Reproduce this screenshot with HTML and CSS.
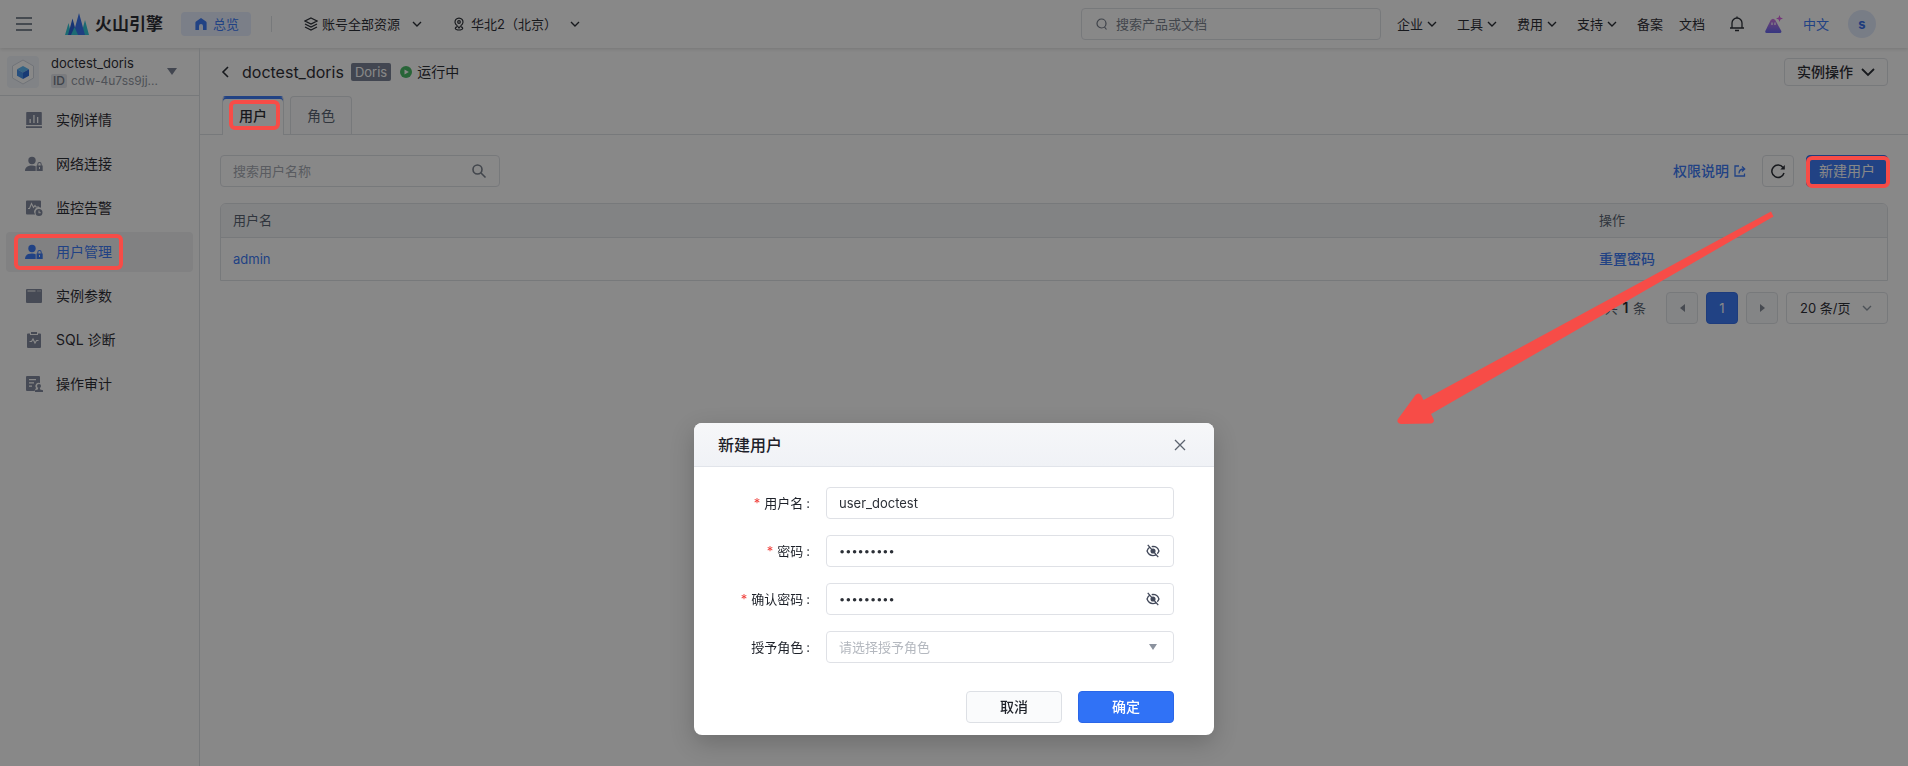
FILE: index.html
```html
<!DOCTYPE html>
<html lang="zh-CN">
<head>
<meta charset="utf-8">
<title>用户管理</title>
<link rel="stylesheet" href="styles.css">
</head>
<body>
<svg class="defs" width="0" height="0" aria-hidden="true">
  <symbol id="down" viewBox="0 0 10 10"><path d="M1 3l4 4 4-4" fill="none" stroke="currentColor" stroke-width="1.4"/></symbol>
  <symbol id="user-lock" viewBox="0 0 18 18"><circle cx="7" cy="5.5" r="3.7"/><path d="M0 16c0-4 3-5.500 7-5.500 1.500 0 2.700.2 3.700.7V16z"/><path fill-rule="evenodd" d="M11.500 10.500h.8V9.300a2.200 2.200 0 0 1 4.400 0v1.200h1V16h-6.200zM13.300 10.500h2.400V9.300a1.200 1.200 0 0 0-2.400 0zM14 12v2h1v-2z"/></symbol>
  <symbol id="eye-off" viewBox="0 0 16 16"><g fill="none" stroke="currentColor" stroke-width="1.500"><path d="M4.500 3.500C2.800 4.700 1.700 6.500 1.200 8c1 3 3.600 5.200 6.800 5.200 1.200 0 2.300-.3 3.200-.8M6.500 3A7 7 0 0 1 8 2.800c3.200 0 5.800 2.200 6.800 5.200a7.500 7.500 0 0 1-1.900 3.100M2 1l12 14"/></g><circle cx="8" cy="8" r="2.900"/></symbol>
</svg>

<div class="app">
<header class="topbar">
  <button class="plain menu-btn" aria-label="菜单"><svg width="16" height="14" viewBox="0 0 16 14"><path d="M0 1h16M0 7h16M0 13h16" stroke="currentColor" stroke-width="1.500"/></svg></button>
  <a class="brand" href="#">
    <svg width="24" height="22" viewBox="0 0 24 22"><path fill="#26c4d4" d="M3.500 10l3 12H0zM20 7l4 15h-8z"/><path fill="#1d56d6" d="M7.500 5.500L12 22H3z"/><path fill="#2d6bf0" d="M14 0l6 22H8z"/><path fill="#26c4d4" d="M9.500 14l3.500 8H6z"/></svg>
    <span>火山引擎</span>
  </a>
  <a class="overview" href="#"><svg width="12" height="12" viewBox="0 0 12 12"><path fill="currentColor" d="M6 0l5 3.500q.6.400.6 1.200V12H8V8a2 2 0 0 0-4 0v4H.4V4.700q0-.8.600-1.200z"/></svg>总览</a>
  <span class="divider"></span>
  <button class="plain scope"><svg width="14" height="14" viewBox="0 0 14 14" fill="none" stroke="currentColor" stroke-width="1.300"><path d="M7 1l6 3-6 3-6-3zM1 7l6 3 6-3M1 10l6 3 6-3"/></svg>账号全部资源<svg class="chev" width="10" height="10"><use href="#down"/></svg></button>
  <button class="plain region"><svg width="10" height="14" viewBox="0 0 10 14" fill="none" stroke="currentColor" stroke-width="1.200"><path d="M3 8.500a4 4 0 1 1 4 0"/><circle cx="5" cy="5" r="1.300"/><path d="M3 8.500L5 11l2-2.500M3 9.800c-2.500.6-2.500 3.200 2 3.200s4.500-2.600 2-3.200"/></svg>华北2（北京）<svg class="chev" width="10" height="10"><use href="#down"/></svg></button>
  <label class="top-search"><svg width="12" height="12" viewBox="0 0 12 12" fill="none" stroke="currentColor" stroke-width="1.200"><circle cx="5.500" cy="5.500" r="4.500"/><path d="M8.500 9l2 2.500"/></svg><input type="search" placeholder="搜索产品或文档" aria-label="搜索产品或文档"></label>
  <nav class="top-nav">
    <a class="drop" href="#">企业<svg width="10" height="10"><use href="#down"/></svg></a>
    <a class="drop" href="#">工具<svg width="10" height="10"><use href="#down"/></svg></a>
    <a class="drop" href="#">费用<svg width="10" height="10"><use href="#down"/></svg></a>
    <a class="drop" href="#">支持<svg width="10" height="10"><use href="#down"/></svg></a>
    <a href="#">备案</a>
    <a href="#">文档</a>
  </nav>
  <button class="plain bell" aria-label="通知"><svg width="14" height="16" viewBox="0 0 14 16" fill="none" stroke="currentColor" stroke-width="1.300"><path d="M0 12h14M2 12V7a5 5 0 0 1 10 0v5M5 14.500h4M7 .5V2"/></svg></button>
  <button class="plain assistant" aria-label="助手"><svg width="18" height="18" viewBox="0 0 18 18"><defs><linearGradient id="peak" x2="0" y2="1"><stop stop-color="#d070e0"/><stop offset="1" stop-color="#5a5cf0"/></linearGradient></defs><path fill="url(#peak)" d="M5.500 5.500Q8 2 10.500 5.500l5.800 10.500q.5 2-1.500 2h-13q-2 0-1.500-2z"/><path fill="#d65ae0" d="M14.500 0l.9 2.600 2.600.9-2.600.9-.9 2.600-.9-2.600-2.600-.9 2.600-.9z"/><path stroke="#fff" stroke-width="1.200" d="M7 7.500V10M10 7.500V10"/></svg></button>
  <a class="lang" href="#">中文</a>
  <span class="avatar">s</span>
</header>

<div class="columns">
<aside class="sidebar">
  <button class="plain instance">
    <span class="cube"><svg width="24" height="26" viewBox="0 0 24 26"><path fill="#fff" stroke="#cfd5df" d="M12 1l10.500 6v12L12 25 1.500 19V7z"/><path fill="#54b4f4" d="M12 7l6 3.300-6 3.200-6-3.200z"/><path fill="#3a8dec" d="M6 10.300l6 3.200V20l-6-3.300z"/><path fill="#1d62d8" d="M18 10.300l-6 3.200V20l6-3.300z"/></svg></span>
    <span class="instance-text"><span class="instance-name">doctest_doris</span><span class="instance-id"><b>ID</b>cdw-4u7ss9jj...</span></span>
    <svg class="caret" width="10" height="7" viewBox="0 0 10 7"><path fill="currentColor" d="M0 0h10L5 7z"/></svg>
  </button>
  <nav class="menu">
    <a href="#"><svg width="18" height="18" viewBox="0 0 18 18"><path fill-rule="evenodd" d="M2 1h14q.8 0 .8.800V14H1.200V1.800Q1.200 1 2 1zM4.500 8v4h1.300V8zM8.300 4v8h1.300V4zM12 6v6h1.300V6zM1 15.300h16V17H1z"/></svg>实例详情</a>
    <a href="#"><svg width="18" height="18"><use href="#user-lock"/></svg>网络连接</a>
    <a href="#"><svg width="18" height="18" viewBox="0 0 18 18"><path d="M2 1.500h13q1 0 1 1v6.300a4.500 4.500 0 0 0-5.800 6.700H2q-1 0-1-1v-12q0-1 1-1z"/><path fill="none" stroke="#fff" stroke-width="1.100" d="M3 9.500h1.500l2-5 2 4 1.500-2 1 1.500h3"/><path fill-rule="evenodd" d="M14 10a3.500 3.500 0 1 1 0 7 3.500 3.500 0 0 1 0-7zM13.500 11.500v2.700h2.300v-1h-1.300v-1.700z"/></svg>监控告警</a>
    <a class="active" href="#"><svg width="18" height="18"><use href="#user-lock"/></svg>用户管理<span class="ring"></span></a>
    <a href="#"><svg width="18" height="18" viewBox="0 0 18 18"><path fill-rule="evenodd" d="M2 2h14q1 0 1 1v12q0 1-1 1H2q-1 0-1-1V3q0-1 1-1zM2.500 3.500v.9h8v-.9zm10 0v.9h1v-.9zm2 0v.9h1v-.9z"/></svg>实例参数</a>
    <a href="#"><svg width="18" height="18" viewBox="0 0 18 18"><path d="M3 2.500h2V4h8V2.500h2q1 0 1 1V16q0 1-1 1H3q-1 0-1-1V3.500q0-1 1-1zM6 1h6v2H6z"/><path fill="none" stroke="#fff" stroke-width="1.100" d="M4.500 10.500h2l1.500-2.500 2 4 1.500-2.500h2"/></svg>SQL 诊断</a>
    <a href="#"><svg width="18" height="18" viewBox="0 0 18 18"><path fill-rule="evenodd" d="M2 1h12q1 0 1 1v6a3.300 3.300 0 0 0-4 5L9.500 16H2q-1 0-1-1V2q0-1 1-1zM4 4v1.300h7V4zM4 7.300v1.300h5V7.300zM4 10.500v1.300h3v-1.300z"/><circle cx="14" cy="11" r="2"/><path d="M13.300 12.500h1.400l.5 2 2.800.8V17h-8v-1.700l2.800-.8z"/></svg>操作审计</a>
  </nav>
</aside>

<main class="main">
  <div class="page-head">
    <div class="title-row">
      <button class="plain back" aria-label="返回"><svg width="8" height="12" viewBox="0 0 8 12"><path d="M7 1L2 6l5 5" fill="none" stroke="currentColor" stroke-width="1.600"/></svg></button>
      <h1>doctest_doris</h1>
      <span class="tag">Doris</span>
      <span class="status"><svg width="12" height="12" viewBox="0 0 12 12"><circle cx="6" cy="6" r="6" fill="#3fb95f"/><path fill="#fff" d="M4.500 3.500L8.800 6l-4.300 2.500z"/></svg>运行中</span>
      <button class="box ops">实例操作<svg width="14" height="14" viewBox="0 0 14 14"><path d="M1 4l6 6 6-6" fill="none" stroke="currentColor" stroke-width="1.800"/></svg></button>
    </div>
    <div class="tabs">
      <button class="tab on">用户<span class="ring"></span></button>
      <button class="tab">角色</button>
    </div>
  </div>

  <section class="content">
    <div class="tools">
      <label class="search"><input type="search" placeholder="搜索用户名称" aria-label="搜索用户名称"><svg width="16" height="16" viewBox="0 0 16 16" fill="none" stroke="currentColor" stroke-width="1.600"><circle cx="6.500" cy="6.500" r="4.500"/><path d="M10 10l4.500 4.500"/></svg></label>
      <a class="help" href="#">权限说明<svg width="12" height="12" viewBox="0 0 12 12" fill="none" stroke="currentColor" stroke-width="1.300"><path d="M5 1H1v10h9.500V8.500M5 8.500C5 5 6.500 4 10 4M8 1.500L10.700 4 8 6.500"/></svg></a>
      <button class="box refresh" aria-label="刷新"><svg width="16" height="16" viewBox="0 0 16 16"><path d="M13 4.500A6.200 6.200 0 1 0 14 10" fill="none" stroke="currentColor" stroke-width="1.500"/><path fill="currentColor" d="M14.800 2v4.500h-4.500z"/></svg></button>
      <button class="primary create">新建用户<span class="ring"></span></button>
    </div>
    <div class="table-wrap">
      <table>
        <thead><tr><th>用户名</th><th class="act">操作</th></tr></thead>
        <tbody><tr><td><a href="#">admin</a></td><td class="act"><a class="strong" href="#">重置密码</a></td></tr></tbody>
      </table>
    </div>
    <div class="pager">
      <span class="total">共 <b>1</b> 条</span>
      <button class="box page muted" aria-label="上一页"><svg width="5" height="8" viewBox="0 0 5 8"><path fill="currentColor" d="M5 0v8L0 4z"/></svg></button>
      <button class="primary page">1</button>
      <button class="box page muted" aria-label="下一页"><svg width="5" height="8" viewBox="0 0 5 8"><path fill="currentColor" d="M0 0v8l5-4z"/></svg></button>
      <span class="box size"><select aria-label="每页条数"><option>20 条/页</option></select><svg width="10" height="10"><use href="#down"/></svg></span>
    </div>
  </section>
</main>
</div>
</div>

<div class="mask"></div>
<svg class="arrow" width="378" height="214" viewBox="0 0 378 214"><path fill="#f74c47" d="M374 1.500l2.500 5L34 204l2.500 5q1.500 4-3 4.500L4 214q-5-1-3-5L18.500 185q3-3 5.500 0l2.500 5z"/></svg>

<div class="stage">
<form class="modal" role="dialog" aria-labelledby="dlg-title">
  <div class="modal-head">
    <h2 id="dlg-title">新建用户</h2>
    <button type="button" class="plain close" aria-label="关闭"><svg width="12" height="12" viewBox="0 0 12 12"><path d="M1 1l10 10M11 1L1 11" stroke="currentColor" stroke-width="1.300"/></svg></button>
  </div>
  <div class="modal-body">
    <div class="row"><label class="req" for="name">用户名</label><div class="field"><input id="name" type="text" value="user_doctest"></div></div>
    <div class="row"><label class="req" for="pw">密码</label><div class="field"><input id="pw" type="password" value="123456789"><button type="button" class="plain" aria-label="显示密码"><svg width="14" height="14"><use href="#eye-off"/></svg></button></div></div>
    <div class="row"><label class="req" for="pw2">确认密码</label><div class="field"><input id="pw2" type="password" value="123456789"><button type="button" class="plain" aria-label="显示密码"><svg width="14" height="14"><use href="#eye-off"/></svg></button></div></div>
    <div class="row"><label for="role">授予角色</label><div class="field"><select id="role"><option>请选择授予角色</option></select><svg class="tri" width="8" height="6" viewBox="0 0 8 6"><path fill="currentColor" d="M0 0h8L4 6z"/></svg></div></div>
  </div>
  <div class="modal-foot">
    <button type="button" class="box">取消</button>
    <button type="button" class="primary">确定</button>
  </div>
</form>
</div>
</body>
</html>
```

FILE: styles.css
```css
* { box-sizing: border-box; }
body {
  margin: 0;
  font: 13px/20px Inter, "Noto Sans CJK SC", sans-serif;
  color: #1d2129;
  background: #fff;
}
h1, h2 { margin: 0; font-weight: 500; }
a { color: inherit; text-decoration: none; }
svg { flex: none; fill: currentColor; }
svg[fill="none"] { fill: none; }
.defs { position: absolute; }
button, input, select { font: inherit; color: inherit; }
input, select { min-width: 0; flex: 1; border: 0; padding: 0; outline: 0; background: none; appearance: none; }
button { display: inline-flex; align-items: center; justify-content: center; padding: 0; }
.plain { border: 0; background: none; }
.box { border: 1px solid #dde0e5; border-radius: 4px; background: #fff; }
.primary { border: 1px solid #2a66e8; border-radius: 4px; background: #3072f6; color: #fff; position: relative; }

.app { display: flex; flex-direction: column; min-height: 100vh; }

.topbar {
  display: flex;
  align-items: center;
  height: 48px;
  padding: 0 32px 0 16px;
  box-shadow: 0 1px 4px rgba(0, 0, 0, .15);
}
.menu-btn { color: #4e5969; }
.brand { display: flex; align-items: center; gap: 6px; margin-left: 33px; font-size: 17px; font-weight: 700; }
.overview {
  display: flex;
  align-items: center;
  gap: 6px;
  height: 24px;
  margin-left: 18px;
  padding: 0 12px 0 14px;
  border-radius: 4px;
  background: #e4ecff;
  color: #3072f6;
}
.divider { width: 1px; height: 16px; margin: 0 32px 0 20px; background: #dde0e5; }
.scope, .region { gap: 4px; }
.region { margin-left: 32px; gap: 7px; }
.chev { margin-left: 8px; }
.region .chev { margin-left: 6px; }
.top-search {
  display: flex;
  align-items: center;
  gap: 8px;
  width: 300px;
  height: 32px;
  margin-left: auto;
  padding: 0 14px;
  border: 1px solid #dde0e5;
  border-radius: 4px;
  color: #6b7280;
}
.top-search input::placeholder { color: #737a87; }
.top-nav { display: flex; gap: 16px; margin-left: 16px; }
.drop { display: flex; align-items: center; gap: 4px; padding-right: 4px; }
.bell { margin-left: 25px; }
.assistant { margin-left: 21px; }
.lang { margin-left: 20px; color: #3072f6; }
.avatar { width: 28px; height: 28px; margin-left: 19px; border-radius: 50%; background: #dfe8fb; color: #2a66e8; font-weight: 700; line-height: 28px; text-align: center; }

.columns { display: flex; flex: 1; }
.sidebar { flex: none; width: 200px; border-right: 1px solid #dde0e5; }
.instance { width: 100%; height: 48px; padding: 0 22px 0 7px; gap: 12px; border-bottom: 1px solid #dde0e5; text-align: left; }
.cube { flex: none; display: flex; align-items: center; justify-content: center; width: 32px; height: 32px; border-radius: 4px; background: #f0f4fa; }
.instance-text { flex: 1; min-width: 0; display: flex; flex-direction: column; }
.instance-name { line-height: 18px; }
.instance-id { display: flex; align-items: center; gap: 4px; font-size: 12px; line-height: 18px; color: #8b919c; white-space: nowrap; }
.instance-id b { padding: 0 2px; border-radius: 2px; background: #e2e5ea; color: #6b7280; font-weight: 500; line-height: 14px; }
.caret { color: #737b8f; }
.menu { display: flex; flex-direction: column; gap: 4px; padding: 4px 6px; }
.menu a { position: relative; display: flex; align-items: center; gap: 13px; height: 40px; padding-left: 19px; border-radius: 4px; font-size: 14px; }
.menu svg { color: #7b8398; }
.menu .active { background: #f0f1f3; color: #3072f6; }
.menu .active svg { color: #3072f6; }

.ring { position: absolute; z-index: 20; border: 4px solid #f74c47; border-radius: 6px; }
.menu .ring { inset: 2px 70px 2px 8px; }
.tab .ring { inset: 3px 3px 5px 6px; }
.create .ring { inset: 0 -3px -2px -1px; }

.main { flex: 1; min-width: 0; }
.page-head { border-bottom: 1px solid #dde0e5; }
.title-row { display: flex; align-items: center; height: 48px; padding: 0 20px 0 21px; }
.title-row h1 { margin: 0 7px 0 13px; font-size: 16px; font-weight: 400; line-height: 24px; }
.tag { padding: 0 4px; border-radius: 2px; background: #737b90; color: #fff; line-height: 18px; }
.status { display: flex; align-items: center; gap: 5px; margin-left: 9px; font-size: 14px; }
.ops { height: 28px; margin-left: auto; padding: 0 12px; gap: 8px; font-size: 14px; font-weight: 500; }
.tabs { display: flex; gap: 6px; height: 38px; padding-left: 22px; }
.tab { position: relative; width: 62px; height: 38px; border: 1px solid #dde0e5; border-bottom: 0; border-radius: 4px 4px 0 0; background: #fafbfc; color: #4e5969; font-size: 14px; }
.tab.on { height: 39px; background: #fff; border-top-color: #3072f6; box-shadow: inset 0 2px #3072f6; color: #1d2129; font-weight: 500; }

.content { padding: 20px; }
.tools { display: flex; align-items: center; }
.search { display: flex; align-items: center; width: 280px; height: 32px; padding: 0 12px; border: 1px solid #dde0e5; border-radius: 4px; color: #737a87; }
.search input::placeholder { color: #a0a5ae; }
.help { display: flex; align-items: center; gap: 5px; margin-left: auto; color: #3072f6; font-size: 14px; font-weight: 500; }
.refresh { width: 32px; height: 32px; margin: 0 12px 0 16px; }
.create { width: 82px; height: 32px; font-size: 14px; }
.table-wrap { margin-top: 16px; border: 1px solid #dde0e5; border-radius: 6px 6px 0 0; overflow: hidden; }
table { width: 100%; border-collapse: collapse; }
th, td { padding: 0 12px; text-align: left; font-weight: 400; }
th { height: 33px; background: #f2f4f7; color: #4e5969; border-bottom: 1px solid #dde0e5; }
td { height: 43px; color: #3072f6; }
.act { width: 300px; }
.strong { font-size: 14px; font-weight: 500; }
.pager { display: flex; align-items: center; justify-content: flex-end; gap: 8px; margin-top: 11px; }
.total { margin-right: 12px; color: #4e5969; white-space: pre; }
.total b { margin: 0 1px; color: #1d2129; font-weight: 600; font-size: 14px; }
.page { width: 32px; height: 32px; }
.muted { background: #f7f8fa; color: #7b8290; }
.size { display: flex; align-items: center; width: 102px; height: 32px; padding: 0 15px 0 13px; }
.size svg { color: #86909c; }

.mask { position: fixed; inset: 0; z-index: 10; background: rgba(17, 17, 17, .5); }
.arrow { position: absolute; z-index: 20; left: 1397px; top: 210px; }
.stage { position: fixed; inset: 0; z-index: 30; display: flex; align-items: flex-end; justify-content: center; padding-bottom: 31px; pointer-events: none; }
.modal { width: 520px; border-radius: 8px; background: #fff; box-shadow: 0 8px 24px rgba(0, 0, 0, .2); overflow: hidden; pointer-events: auto; }
.modal-head { display: flex; align-items: center; justify-content: space-between; height: 44px; padding: 0 28px 0 24px; border-bottom: 1px solid #e1e4ea; background: linear-gradient(#f6f7f9, #f0f2f6); }
.modal-head h2 { font-size: 16px; line-height: 24px; }
.close { color: #5c636f; }
.modal-body { display: grid; gap: 16px; padding: 20px 40px 28px 24px; }
.row { display: flex; align-items: center; gap: 16px; }
.row label { width: 92px; text-align: right; white-space: nowrap; }
.row label::after { content: ":"; margin-left: 3px; }
.row .req::before { content: "*"; margin-right: 4px; color: #f0413c; }
.field { flex: 1; display: flex; align-items: center; height: 32px; padding: 0 13px 0 12px; border: 1px solid #dfe1e6; border-radius: 4px; color: #2b2f36; }
.field input[type="password"] { font-size: 11px; }
.field button { color: #42495a; }
.field select { color: #b4b8bf; }
.tri { margin-right: 3px; color: #8b929e; }
.modal-foot { display: flex; justify-content: flex-end; gap: 16px; padding: 0 40px 12px; }
.modal-foot button { width: 96px; height: 32px; font-size: 14px; font-weight: 500; }
.modal-foot .box { background: #fafbfc; }
```
